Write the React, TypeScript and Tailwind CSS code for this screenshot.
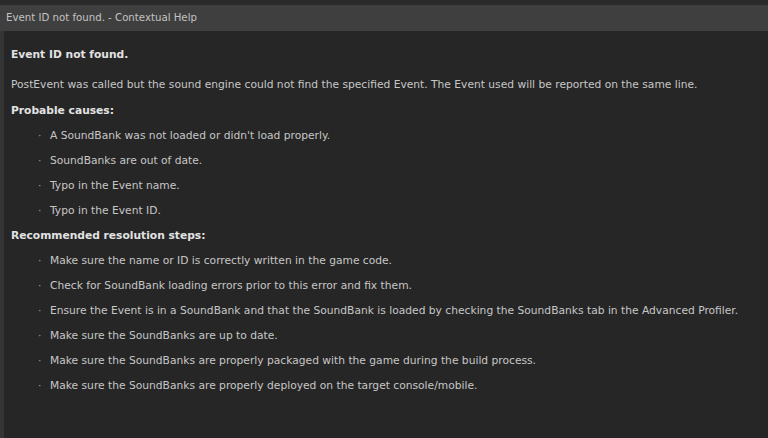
import React from 'react';

// 帮助内容数据
const causes: string[] = [
  "A SoundBank was not loaded or didn't load properly.",
  'SoundBanks are out of date.',
  'Typo in the Event name.',
  'Typo in the Event ID.',
];

const steps: string[] = [
  'Make sure the name or ID is correctly written in the game code.',
  'Check for SoundBank loading errors prior to this error and fix them.',
  'Ensure the Event is in a SoundBank and that the SoundBank is loaded by checking the SoundBanks tab in the Advanced Profiler.',
  'Make sure the SoundBanks are up to date.',
  'Make sure the SoundBanks are properly packaged with the game during the build process.',
  'Make sure the SoundBanks are properly deployed on the target console/mobile.',
];

const BulletList: React.FC<{ items: string[] }> = ({ items }) => (
  <ul>
    {items.map((item, index) => (
      <li key={index} className="flex h-[25px] items-center pl-[27px]">
        <span className="w-[12px] text-[#9a9a9a]">·</span>
        <span>{item}</span>
      </li>
    ))}
  </ul>
);

export default function App() {
  return (
    <div className="flex h-[438px] w-[768px] flex-col bg-[#2a2a2a] font-['DejaVu_Sans',Verdana,sans-serif] text-[10.7px] text-[#c6c6c6]">
      <div className="h-[5px] bg-[#2a2a2a]" />
      <div className="flex h-[26px] items-center bg-[#3f3f3f] pl-[6px] text-[10.2px] text-[#c2c2c2]">
        Event ID not found. - Contextual Help
      </div>
      <div className="flex flex-1">
        <div className="w-[4px] bg-[#353535]" />
        <div className="flex-1 bg-[#262626] pl-[7px] pt-[12px]">
          <div className="flex h-[25px] items-center font-bold text-[#e2e2e2]">Event ID not found.</div>
          <div className="mt-[5px] flex h-[25px] items-center">
            PostEvent was called but the sound engine could not find the specified Event. The Event used will be reported on the same line.
          </div>
          <div className="flex h-[26px] items-center font-bold text-[#e2e2e2]">Probable causes:</div>
          <BulletList items={causes} />
          <div className="flex h-[25px] items-center font-bold text-[#e2e2e2]">Recommended resolution steps:</div>
          <BulletList items={steps} />
        </div>
      </div>
    </div>
  );
}
